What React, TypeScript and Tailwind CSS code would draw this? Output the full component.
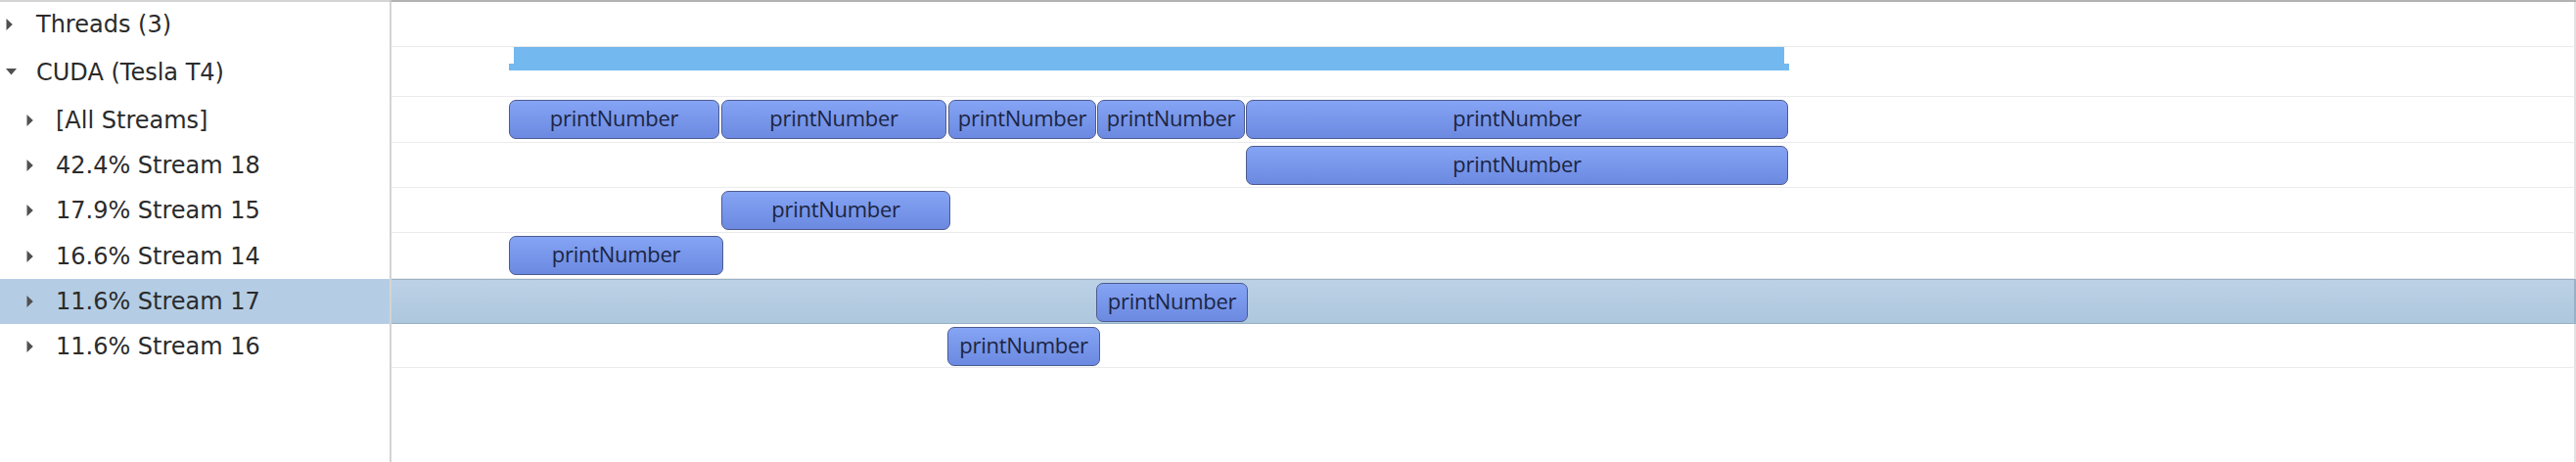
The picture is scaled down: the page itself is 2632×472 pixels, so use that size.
import React from "react";

type Row = {
  label: string;
  indent: boolean;
  expanded?: boolean;
  h: string;
  selected?: boolean;
  cuda?: boolean;
  bars: [number, number][];
};

const OFFSET = 400;

const rows: Row[] = [
  { label: "Threads (3)", indent: false, h: "h-[46px]", bars: [] },
  { label: "CUDA (Tesla T4)", indent: false, expanded: true, h: "h-[51px]", cuda: true, bars: [] },
  {
    label: "[All Streams]",
    indent: true,
    h: "h-[47px]",
    bars: [
      [520, 735],
      [737, 967],
      [969, 1120],
      [1121, 1272],
      [1273, 1827],
    ],
  },
  { label: "42.4% Stream 18", indent: true, h: "h-[46px]", bars: [[1273, 1827]] },
  { label: "17.9% Stream 15", indent: true, h: "h-[46px]", bars: [[737, 971]] },
  { label: "16.6% Stream 14", indent: true, h: "h-[47px]", bars: [[520, 739]] },
  { label: "11.6% Stream 17", indent: true, h: "h-[46px]", selected: true, bars: [[1120, 1275]] },
  { label: "11.6% Stream 16", indent: true, h: "h-[45px]", bars: [[968, 1124]] },
];

function Tri({ down }: { down?: boolean }) {
  return down ? (
    <svg width="11" height="7" viewBox="0 0 11 7" className="shrink-0">
      <path d="M0 0 L11 0 L5.5 6.5 Z" fill="#505050" />
    </svg>
  ) : (
    <svg width="7" height="12" viewBox="0 0 7 12" className="shrink-0">
      <path d="M0.5 0 L6.8 6 L0.5 12 Z" fill="#505050" />
    </svg>
  );
}

function Bar({ x0, x1 }: { x0: number; x1: number }) {
  return (
    <div
      className="absolute top-[3px] h-[40px] rounded-[7px] border-[1.5px] border-[#4d5b90] bg-linear-to-b from-[#86a4f4] to-[#6b89e0] flex items-center justify-center overflow-hidden pb-[4px]"
      style={{ left: x0 - OFFSET, width: x1 - x0 }}
    >
      <span className="text-[22px] leading-none text-[#1b2542] whitespace-nowrap [font-family:'Open_Sans',sans-serif] tracking-[-0.3px]">
        printNumber
      </span>
    </div>
  );
}

export default function App() {
  return (
    <div className="w-[2632px] h-[472px] bg-white flex flex-col overflow-hidden [font-family:'DejaVu_Sans',sans-serif]">
      <div className="flex h-[2px] shrink-0">
        <div className="w-[398px] bg-[#d4d4d4]" />
        <div className="w-[2px] bg-[#c8c8c8]" />
        <div className="flex-1 bg-[#b2b2b2]" />
      </div>
      {rows.map((r, i) => (
        <div key={i} className={`flex shrink-0 ${r.h}`}>
          <div
            className={`w-[398px] shrink-0 flex items-center ${r.indent ? "pl-[27px]" : "pl-[6px]"} ${
              r.selected ? "bg-[#b4cde4]" : ""
            }`}
          >
            <div className="w-[11px] flex justify-start">
              <Tri down={r.expanded} />
            </div>
            <span
              className={`text-[24px] leading-none text-[#2b2b2b] whitespace-nowrap ${
                r.indent ? "ml-[19px]" : "ml-[20px]"
              }`}
            >
              {r.label}
            </span>
          </div>
          <div className="w-[2px] shrink-0 bg-[#d4d4d4]" />
          <div
            className={`flex-1 relative border-r-2 ${
              r.selected
                ? "bg-linear-to-b from-[#bcd1e6] to-[#adc7dd] border-y border-[#98b1c7] border-r-[#98b1c7]"
                : "border-b border-[#ebebeb] border-r-[#e2e2e2]"
            }`}
          >
            {r.cuda && (
              <>
                <div className="absolute left-[125px] top-0 w-[1298px] h-[24px] bg-[#73b9f0]" />
                <div className="absolute left-[120px] top-[17px] w-[1308px] h-[7px] bg-[#73b9f0]" />
              </>
            )}
            {r.bars.map(([a, b], j) => (
              <Bar key={j} x0={a} x1={b} />
            ))}
          </div>
        </div>
      ))}
      <div className="flex flex-1">
        <div className="w-[398px] shrink-0" />
        <div className="w-[2px] shrink-0 bg-[#d4d4d4]" />
        <div className="flex-1 border-r-2 border-[#e2e2e2]" />
      </div>
    </div>
  );
}
